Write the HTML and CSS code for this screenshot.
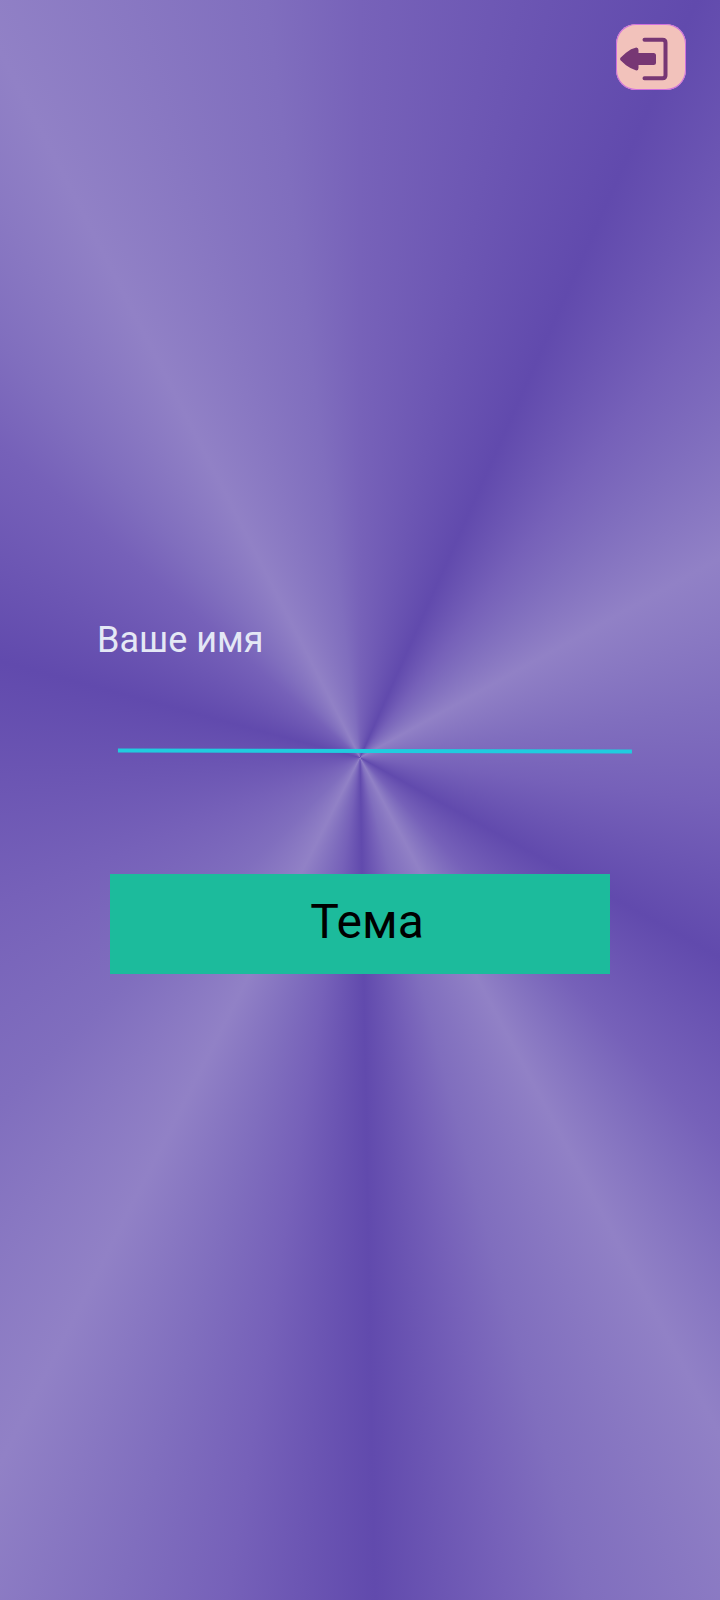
FILE: index.html
```html
<!DOCTYPE html>
<html lang="ru">
<head>
  <meta charset="utf-8">
  <meta name="viewport" content="width=device-width, initial-scale=1">
  <title>Ваше имя</title>
  <link rel="stylesheet" href="styles.css">
</head>
<body>
  <div class="screen">
    <header class="topbar">
      <button class="exit" type="button" aria-label="Выход">
        <svg class="exit-icon" viewBox="0 0 70 66" aria-hidden="true">
          <path d="M28.500 15.700H46.500Q49.500 15.700 49.500 18.700V51.300Q49.500 54.300 46.500 54.300H28.500" fill="none" stroke="#773774" stroke-width="4" stroke-linecap="round" stroke-linejoin="round"/>
          <path d="M4.500 33.800 L10 28.700 Q15 24.600 20.300 23.500 Q22.500 23.500 22.500 26 V29 H37.500 Q40 29 40 31.500 V38.500 Q40 41 37.500 41 H22.500 V44 Q22.500 46.500 20.300 46.500 Q15 45 10 41.300 L4.500 36.200 Q3.500 35 4.500 33.800Z" fill="#773774"/>
        </svg>
      </button>
    </header>
    <form class="form">
      <label class="label" for="name">Ваше имя</label>
      <input class="name" id="name" type="text" autocomplete="off">
      <button class="theme" type="button">Тема</button>
    </form>
  </div>
</body>
</html>
```

FILE: styles.css
```css
* {
  box-sizing: border-box;
}

body {
  margin: 0;
  font-family: Roboto, "Liberation Sans", sans-serif;
}

.screen {
  display: flex;
  flex-direction: column;
  min-height: 100vh;
  background: conic-gradient(
    from 0deg at 50% 47.35%,
    #7762b9 0deg,
    #614aad 24deg,
    #7661b9 38deg,
    #806ebe 47deg,
    #9181c6 61deg,
    #806ebe 82deg,
    #7661b9 97deg,
    #614aad 119deg,
    #7661b9 137deg,
    #806ebe 143deg,
    #9181c6 152deg,
    #806ebe 165deg,
    #7661b9 170deg,
    #614aad 179deg,
    #7661b9 189deg,
    #806ebe 196deg,
    #9181c6 207deg,
    #806ebe 226deg,
    #7661b9 248deg,
    #614aad 285deg,
    #7661b9 311deg,
    #806ebe 319deg,
    #9181c6 333deg,
    #806ebe 353deg,
    #7762b9 360deg
  );
}

.topbar {
  display: flex;
  justify-content: flex-end;
  padding: 24px 34px 0;
}

.exit {
  width: 70px;
  height: 66px;
  padding: 0;
  border: 0;
  border-radius: 20px;
  background: #f2c2bb;
  box-shadow: inset 0 0 0 1px #cf70df;
  cursor: pointer;
}

.exit-icon {
  display: block;
  width: 100%;
}

.form {
  display: flex;
  flex-direction: column;
  padding: 528px 88px 0 97px;
}

.label {
  color: #e4e8f5;
  font-size: 36px;
  line-height: 44px;
}

.name {
  height: 52px;
  margin: 39px 0 0 21px;
  padding: 0 8px;
  border: 0;
  border-bottom: 4px solid #20ccdf;
  background: transparent;
  color: #e4e8f5;
  font: inherit;
  font-size: 36px;
  outline: 0;
  transform: rotate(0.1deg);
}

.theme {
  height: 100px;
  margin: 121px 22px 0 13px;
  padding: 0 0 6px 14px;
  border: 0;
  background: #1cbb9c;
  color: #000;
  font: inherit;
  font-size: 48px;
  cursor: pointer;
}
```
